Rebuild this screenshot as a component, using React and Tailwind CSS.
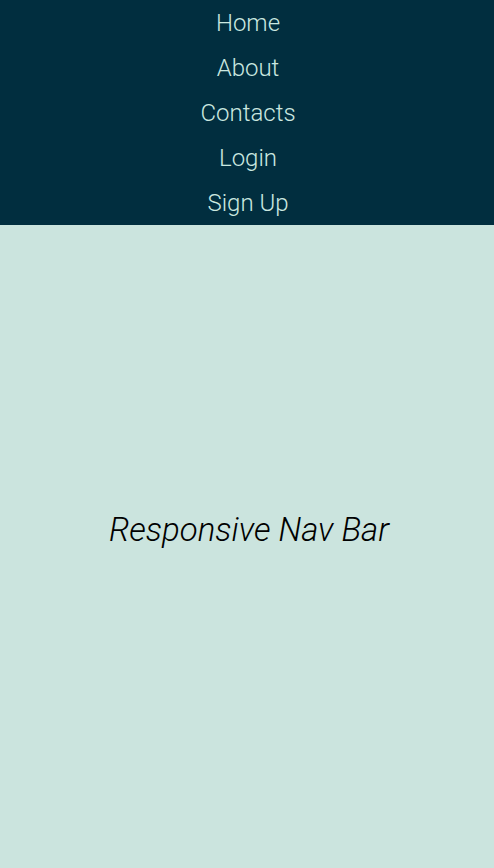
import React from "react";

const links = ["Home", "About", "Contacts", "Login", "Sign Up"];

const App = () => {
  return (
    <div className="min-h-screen flex flex-col bg-[#cbe4de] font-['Roboto',sans-serif]">
      {/* Nav */}
      <nav className="bg-[#012e3f]">
        <ul className="flex flex-col items-center pl-[2px]">
          {links.map((link) => (
            <li key={link} className="h-[45px] flex items-center">
              <a href="#" className="text-[24px] font-light text-[#cbe8e0] leading-none">
                {link}
              </a>
            </li>
          ))}
        </ul>
      </nav>

      {/* Content */}
      <main className="flex-1 flex justify-center pt-[285px] pl-[4px]">
        <h1 className="text-[33px] font-light italic text-black leading-[40px] h-[40px]">
          Responsive Nav Bar
        </h1>
      </main>
    </div>
  );
};

export default App;
